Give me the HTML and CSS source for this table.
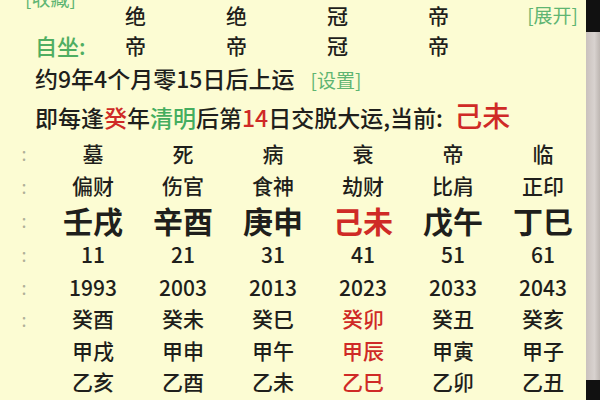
FILE: index.html
```html
<!DOCTYPE html>
<html lang="zh">
<head>
<meta charset="utf-8">
<link rel="stylesheet" href="styles.css">
</head>
<body>
<div class="screen">
  <div class="page">
    <div class="top-grid">
      <span class="link collect">[收藏]</span>
      <span class="cell">绝</span>
      <span class="cell">绝</span>
      <span class="cell">冠</span>
      <span class="cell">帝</span>
      <span class="link expand">[展开]</span>

      <span class="label">自坐:</span>
      <span class="cell">帝</span>
      <span class="cell">帝</span>
      <span class="cell">冠</span>
      <span class="cell">帝</span>
      <span></span>
    </div>

    <p class="line l1">约9年4个月零15日后上运<span class="link setup">[设置]</span></p>
    <p class="line l2">即每逢<span class="red">癸</span>年<span class="green">清明</span>后第<span class="red">14</span>日交脱大运,当前: <span class="red now">己未</span></p>

    <div class="luck">
      <span class="colon">:</span>
      <span>墓</span><span>死</span><span>病</span><span>衰</span><span>帝</span><span>临</span>

      <span class="colon">:</span>
      <span>偏财</span><span>伤官</span><span>食神</span><span>劫财</span><span>比肩</span><span>正印</span>

      <span class="colon">:</span>
      <span class="gz">壬戌</span><span class="gz">辛酉</span><span class="gz">庚申</span><span class="gz red">己未</span><span class="gz">戊午</span><span class="gz">丁巳</span>

      <span class="colon">:</span>
      <span>11</span><span>21</span><span>31</span><span>41</span><span>51</span><span>61</span>

      <span class="colon">:</span>
      <span>1993</span><span>2003</span><span>2013</span><span>2023</span><span>2033</span><span>2043</span>

      <span class="colon">:</span>
      <span>癸酉</span><span>癸未</span><span>癸巳</span><span class="red">癸卯</span><span>癸丑</span><span>癸亥</span>

      <span></span>
      <span>甲戌</span><span>甲申</span><span>甲午</span><span class="red">甲辰</span><span>甲寅</span><span>甲子</span>

      <span></span>
      <span>乙亥</span><span>乙酉</span><span>乙未</span><span class="red">乙巳</span><span>乙卯</span><span>乙丑</span>
    </div>
  </div>
  <div class="scrollbar">
    <div class="sb-top"></div>
    <div class="sb-mid"></div>
    <div class="sb-bot"></div>
  </div>
</div>
</body>
</html>
```

FILE: styles.css
```css
html, body {
  margin: 0;
  padding: 0;
}

body {
  width: 600px;
  height: 400px;
  overflow: hidden;
  font-family: "Noto Sans CJK SC", "Noto Sans", sans-serif;
  font-weight: 500;
  color: #1f1f1c;
}

.screen {
  display: flex;
  width: 600px;
  height: 400px;
}

.page {
  width: 586px;
  height: 400px;
  background: #fcfcd3;
  overflow: hidden;
}

.top-grid {
  display: grid;
  grid-template-columns: 60px repeat(4, 101px) 1fr;
  grid-auto-rows: 30px;
  align-items: center;
  padding: 0 8px 0 25px;
  font-size: 21px;
  line-height: 30px;
}

.cell {
  text-align: center;
}

.link {
  color: #5fb572;
  font-size: 19px;
  font-weight: 400;
}

.collect {
  align-self: start;
  margin-top: -17px;
}

.expand {
  justify-self: end;
}

.label {
  color: #4fae62;
  font-size: 22px;
  margin-left: 10px;
  white-space: nowrap;
}

.line {
  margin: 0;
  padding-left: 35px;
  font-size: 23px;
  white-space: nowrap;
}

.l1 {
  height: 36px;
  line-height: 36px;
}

.setup {
  margin-left: 16px;
}

.l2 {
  height: 38px;
  line-height: 38px;
}

.red {
  color: #cf2a26;
}

.green {
  color: #45ad5f;
}

.now {
  font-size: 28px;
  margin-left: 6px;
}

.luck {
  display: grid;
  grid-template-columns: 48px repeat(6, 90px);
  grid-template-rows: 32px 33px 35px 34px 32px 31px 32px 31px;
  align-items: center;
  justify-items: center;
  padding-top: 3px;
  font-size: 21px;
  line-height: 1;
}

.colon {
  color: #b0b098;
  font-size: 18px;
  font-weight: 400;
}

.gz {
  font-size: 30px;
  font-weight: 700;
}

.scrollbar {
  width: 14px;
  height: 400px;
  display: flex;
  flex-direction: column;
}

.sb-top {
  height: 32px;
  background: #111;
}

.sb-mid {
  flex: 1;
  background: linear-gradient(90deg, #c9c1bd, #d8d2cf 60%, #bdb6b2);
}

.sb-bot {
  height: 20px;
  background: #111;
}
```
